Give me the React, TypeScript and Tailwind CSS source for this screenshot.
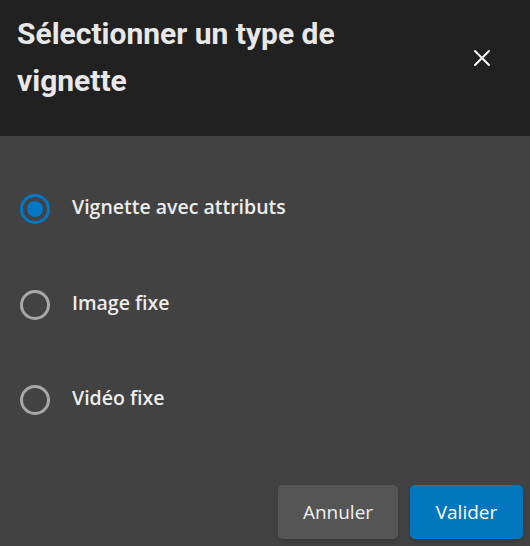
import { X } from "lucide-react";
import { useState } from "react";

const options = [
	{ id: "attributes", label: "Vignette avec attributs" },
	{ id: "image", label: "Image fixe" },
	{ id: "video", label: "Vidéo fixe" },
];

export default function App() {
	const [selected, setSelected] = useState("attributes");

	return (
		<div className="w-[530px] h-[546px] flex flex-col bg-[#424242] overflow-hidden" style={{ fontFamily: "Roboto, 'Liberation Sans', sans-serif" }}>
			{/* Header */}
			<div className="h-[136px] shrink-0 bg-[#212121] flex items-start justify-between pl-[17px] pr-[34px] pt-[10px]">
				<h1 className="text-[30px] leading-[47px] font-bold text-[#e8e8e8] w-[360px]">
					Sélectionner un type de vignette
				</h1>
				<button type="button" className="mt-[34px] text-white" aria-label="Fermer">
					<X className="w-[28px] h-[28px]" strokeWidth={1.6} />
				</button>
			</div>

			{/* Options */}
			<div className="flex-1 flex flex-col pt-[49px] pl-[20px]" style={{ fontFamily: "'Open Sans', 'Noto Sans', sans-serif" }}>
				{options.map((opt) => {
					const active = selected === opt.id;
					return (
						<button
							type="button"
							key={opt.id}
							onClick={() => setSelected(opt.id)}
							className="h-[95.5px] flex items-start gap-[22px] text-left"
						>
							<span
								className={`mt-[9px] w-[30px] h-[30px] rounded-full border-[3px] flex items-center justify-center shrink-0 ${
									active ? "border-[#0277c6]" : "border-[#a8a8a8]"
								}`}
							>
								{active && <span className="w-[16px] h-[16px] rounded-full bg-[#0277c6]" />}
							</span>
							<span className="text-[19.5px] leading-[44px] font-semibold text-[#ececec]">{opt.label}</span>
						</button>
					);
				})}
			</div>

			{/* Footer */}
			<div className="flex justify-end gap-[12px] pr-[7px] pb-[7px]" style={{ fontFamily: "'Open Sans', 'Noto Sans', sans-serif" }}>
				<button type="button" className="w-[120px] h-[54px] rounded-[5px] bg-[#555555] text-[#f0f0f0] text-[19px] font-medium shadow-md">
					Annuler
				</button>
				<button type="button" className="w-[113px] h-[54px] rounded-[5px] bg-[#0277bd] text-white text-[19px] font-medium shadow-md">
					Valider
				</button>
			</div>
		</div>
	);
}
